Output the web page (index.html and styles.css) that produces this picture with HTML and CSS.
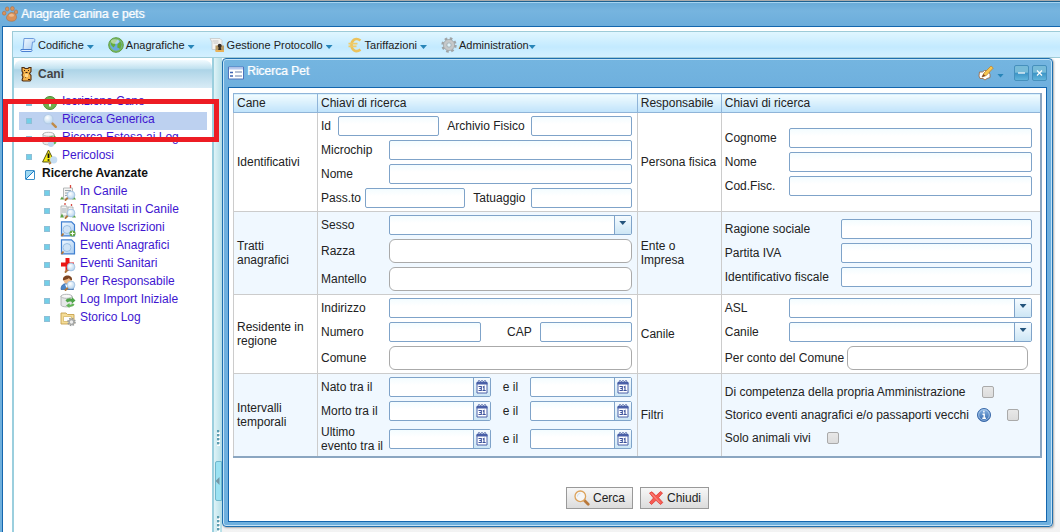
FILE: index.html
```
<!DOCTYPE html>
<html lang="it">
<head>
  <meta charset="UTF-8">
  <meta name="viewport" content="width=device-width, initial-scale=1.0">
  <title>Anagrafe canina e pets</title>
  <link rel="stylesheet" href="styles.css">
</head>
<body>
  <!-- shared icons -->
  <svg class="sprite" aria-hidden="true">
    <defs>
      <linearGradient id="g-doc" x1="0" y1="0" x2="1" y2="1"><stop offset="0" stop-color="#f4faff"/><stop offset="1" stop-color="#a9cdf2"/></linearGradient>
      <radialGradient id="g-lens" cx=".4" cy=".35" r=".7"><stop offset="0" stop-color="#fff"/><stop offset="1" stop-color="#b4d3ee"/></radialGradient>
      <linearGradient id="g-info" x1="0" y1="0" x2="0" y2="1"><stop offset="0" stop-color="#8db8e6"/><stop offset="1" stop-color="#2d62a8"/></linearGradient>
    </defs>
    <symbol id="paw" viewBox="0 0 16 16">
      <g fill="#d9925a" stroke="#a8693d" stroke-width=".5"><ellipse cx="2.2" cy="7.2" rx="1.8" ry="2"/><ellipse cx="5.2" cy="3" rx="1.8" ry="2.1"/><ellipse cx="10.4" cy="2.6" rx="1.9" ry="2.1"/><ellipse cx="14" cy="6" rx="1.7" ry="2.1"/><path d="M5 13.5c-1.600-2.500 1-6 4-7 2.800-.4 4.600 1.200 5.400 3.400.7 2.500-.8 5-3.600 5.300-2.300.2-4.600-.2-5.800-1.700z"/></g>
      <ellipse cx="9.500" cy="9.200" rx="2.600" ry="1.500" fill="#f0b989"/>
    </symbol>
    <symbol id="scroll" viewBox="0 0 16 16">
      <path d="M4 1.500h9.500c1 0 1.500.8 1.300 1.800L14.500 5h-2l-1 8H3z" fill="url(#g-doc)" stroke="#6d9bdc"/>
      <path d="M1 12.500h10.500c.8 0 .7 2-.3 2H2c-1 0-1.500-1-1-2z" fill="#e4f1ff" stroke="#4a7fd0"/>
    </symbol>
    <symbol id="globe" viewBox="0 0 16 16">
      <circle cx="8" cy="8" r="7.300" fill="#7dbb5c" stroke="#5c9c46"/>
      <circle cx="8" cy="8" r="5.800" fill="#68a9df"/>
      <path d="M3 4.500C5 2 8 1.800 9.500 2.500L8 5 6.500 6l1 2-2 2.500L3 8z M9.500 7l3-2.500 1.300 3-1.500 4.500-3-1.500z" fill="#65ad3b"/>
      <ellipse cx="7" cy="4.500" rx="4" ry="2.300" fill="#fff" opacity=".5"/>
    </symbol>
    <symbol id="lockdoc" viewBox="0 0 16 16">
      <path d="M1 1.500h10l2 2v9H3V5z" fill="#f4f4f2" stroke="#c5c8c8" stroke-width=".8"/>
      <path d="M3.500 4h6M4.500 6h5" stroke="#c4c4c4"/>
      <path d="M6.500 8.500h8.500v5.500H6.500z" fill="#b99a63"/><path d="M6.500 13h8.500v2H6.500z" fill="#e8b25a"/>
      <circle cx="10.700" cy="8.800" r="2" fill="#35302a"/><path d="M10 9h1.500l.8 4H9.200z" fill="#35302a"/>
    </symbol>
    <symbol id="euro" viewBox="0 0 16 16">
      <path d="M13.500 3.500C8.500-.2 4.500 3.500 4.500 8s4 8.300 9 4.600" fill="none" stroke="#ebc25c" stroke-width="2.600"/>
      <path d="M1.500 6.600h9M1.500 9.400h8" stroke="#f0cb69" stroke-width="1.600"/>
    </symbol>
    <symbol id="gear" viewBox="0 0 16 16">
      <circle cx="8" cy="8" r="6.500" fill="none" stroke="#a0a4a6" stroke-width="2.400" stroke-dasharray="2.600 2.505"/>
      <circle cx="8" cy="8" r="4" fill="none" stroke="#c6c8c9" stroke-width="3.200"/>
      <circle cx="8" cy="8" r="5.600" fill="none" stroke="#9ba0a2" stroke-width=".7"/><circle cx="8" cy="8" r="2.200" fill="#dff3fb" stroke="#94999b" stroke-width=".7"/>
    </symbol>
    <symbol id="dog" viewBox="0 0 16 16">
      <path d="M3 1.500h2l1 1h3l1-1h2v4l-1.500 2 1.500 2v4l-1 1.500H4l-1-1 1-3-1-2 1-2L3 5z" fill="#f3b24a" stroke="#4f2c12" stroke-width="1.100"/>
      <path d="M5.500 4v1M9.500 4v1M6.500 6.500h2M6 11h1M9 13.500h2" stroke="#3b1e0a"/><path d="M6 8h3v3H6z" fill="#ffd98a"/>
    </symbol>
    <symbol id="lens" viewBox="0 0 16 16">
      <path d="M9.800 9.800l4 4" stroke="#c08a48" stroke-width="2.400" stroke-linecap="round"/>
      <circle cx="6.300" cy="6.200" r="4.700" fill="url(#g-lens)" stroke="#b5cce6" stroke-width="1.200"/>
    </symbol>
    <symbol id="minilens" viewBox="0 0 16 16">
      <path d="M8 12.500L5.500 15" stroke="#b0763a" stroke-width="1.800" stroke-linecap="round"/>
      <circle cx="11" cy="10" r="3.900" fill="url(#g-lens)" stroke="#9dbfdf" stroke-width=".8"/>
    </symbol>
    <symbol id="add" viewBox="0 0 16 16">
      <circle cx="8" cy="8" r="6.500" fill="#6fb04d" stroke="#4b8a35"/><path d="M8 4.500v7M4.500 8h7" stroke="#fff" stroke-width="2"/>
    </symbol>
    <symbol id="db" viewBox="0 0 16 16">
      <path d="M1 3v9c0 2.500 11 2.500 11 0V3z" fill="#e5e7e7" stroke="#a3a7a8" stroke-width=".8"/><ellipse cx="6.500" cy="3.300" rx="5.500" ry="2" fill="#f8f8f8" stroke="#a3a7a8" stroke-width=".8"/>
      <path d="M5.500 7.500c1.500-2.500 4.500-2.700 6.500-1.500V4l3.500 3.500-3.500 3V9c-2-.9-3.500-.5-4.500.5z" fill="#4fa548"/>
      <path d="M14.500 11.500c-1 2-3.500 2.500-5 2V15L6 12.500 9.500 10v1.500c1.500.4 2.500 0 3.500-1z" fill="#64b558"/>
    </symbol>
    <symbol id="dblens" viewBox="0 0 16 16"><use href="#db"/><circle cx="9" cy="13" r="3" fill="#bcd6ee"/></symbol>
    <symbol id="warning" viewBox="0 0 16 16">
      <path d="M6.500 1L12.500 13H.6z" fill="#f8ec16" stroke="#56540f"/><path d="M6.500 4.500v4.500M6.500 10.300v1.500" stroke="#111" stroke-width="1.800"/>
      <path d="M9 13.500L7 15" stroke="#b0763a" stroke-width="1.600"/><circle cx="11.700" cy="10.800" r="3.600" fill="#c6ddf2"/>
    </symbol>
    <symbol id="kennel" viewBox="0 0 16 16">
      <path d="M3.500 3h9v11h-9z" fill="#f5f5f5" stroke="#a6a9aa" stroke-width=".8"/><path d="M5 5.500h6M5 8h3M5 10.500h2" stroke="#98a6ad"/>
      <path d="M10.500 0v3" stroke="#d84b42" stroke-width="1.300"/><path d="M0 14.500l2-3 2 3zM12 14.500l2-3 2 3z" fill="#5ba345"/><use href="#minilens"/>
    </symbol>
    <symbol id="transit" viewBox="0 0 16 16">
      <path d="M1 3h6v10H1zM8 4h5v9H8z" fill="#f3f4f4" stroke="#a3a7a8" stroke-width=".8"/><path d="M3 5v5M5 5v5M9.500 6v4" stroke="#a5afb4"/>
      <path d="M5 0v2M11.500 1v2" stroke="#d84b42" stroke-width="1.300"/><path d="M0 14.500l2-4 2 4zM12 14.500l2-3 2 3z" fill="#5ba345"/><use href="#minilens"/>
    </symbol>
    <symbol id="bluedoc" viewBox="0 0 16 16">
      <path d="M1.500.8h10l3 3v11h-13z" fill="url(#g-doc)" stroke="#3f7fd0" stroke-width="1.200"/><circle cx="7" cy="8.500" r="4" fill="#cfe3f6" stroke="#8eb8e0" stroke-width=".8"/>
      <path d="M3.500 12.500L1.500 15" stroke="#b0763a" stroke-width="1.800"/>
    </symbol>
    <symbol id="bluedocadd" viewBox="0 0 16 16"><use href="#bluedoc"/><circle cx="12.500" cy="12.500" r="3" fill="#5da23c"/><path d="M12.500 10.500v4M10.500 12.500h4" stroke="#fff" stroke-width="1.200"/></symbol>
    <symbol id="health" viewBox="0 0 16 16"><path d="M5.500 1h4v4.500H14v4H9.500V14h-4V9.500H1v-4h4.500z" fill="#ea1616"/><use href="#minilens"/></symbol>
    <symbol id="person" viewBox="0 0 16 16">
      <path d="M1 14.500c0-4 2-6 6-6s6.500 2 6.500 6z" fill="#4c86c8" stroke="#2e5f9f" stroke-width=".7"/><circle cx="7.500" cy="5" r="3.800" fill="#efba88"/>
      <path d="M3 5.500C2.500 2 5 .6 7.500.6S12.500 2 12 5.500C10.500 5 9.500 4 9 3 7.500 4.500 5 4.500 3 5.500z" fill="#7d4420"/><path d="M5 9.500L7 14l2-4.500z" fill="#fff"/><use href="#minilens"/>
    </symbol>
    <symbol id="folder" viewBox="0 0 16 16">
      <path d="M1 2h5l1.500 1.500H14v9.500H1z" fill="#f5dd97" stroke="#c6a04e" stroke-width=".9"/><path d="M3.500 5.500h8v5h-8z" fill="#fff" stroke="#d6b76a" stroke-width=".8"/>
      <circle cx="11.500" cy="11" r="3.400" fill="none" stroke="#969a9c" stroke-width="1.800" stroke-dasharray="1.500 1.170"/><circle cx="11.500" cy="11" r="2.300" fill="#eee" stroke="#a5a8aa" stroke-width="1.300"/>
    </symbol>
    <symbol id="form" viewBox="0 0 16 14">
      <path d="M.5 1h15v12H.5z" fill="#fff" stroke="#4f74bd"/><path d="M1 1.500h14v2H1z" fill="#b7c9ee"/><path d="M2 6.500h3M2 10h3" stroke="#3e64b4" stroke-width="1.300"/><path d="M7 6h7M7 10h7" stroke="#b4bfd4" stroke-width="1.800"/>
    </symbol>
    <symbol id="pencil" viewBox="0 0 16 16">
      <path d="M1.500 7h3l2-1.500h4l1.500 4v3l-3 1-2 1.500-2-1.500h-3L1 11z" fill="#fff" stroke="#99633b" stroke-width=".8"/><path d="M4 12l2-4 7-7 2.300 2-7 7.500z" fill="#f7c64f" stroke="#b8863a" stroke-width=".8"/><path d="M4 12l1.500-3 1.800 1.800z" fill="#7d3f24"/>
    </symbol>
    <symbol id="calendar" viewBox="0 0 12 15">
      <path d="M1 3.500h10v10.500H1z" fill="#fff" stroke="#4a60a8"/><path d="M.5 3.500h11v2H.5z" fill="#4a60a8"/><path d="M1.500 3.500L3 1.300l1.500 1.700L6 1.300l1.500 1.700L9 1.300l1.500 2.200" fill="none" stroke="#3c529c" stroke-width=".9"/>
      <path d="M2.500 7.500h2.800v4H2.500M3.300 9.500h2M8 12V7.500L6.800 8.300M6.500 11.500h3.200" fill="none" stroke="#3c529c" stroke-width="1.100"/>
    </symbol>
    <symbol id="info" viewBox="0 0 14 14">
      <circle cx="7" cy="7" r="6.500" fill="url(#g-info)" stroke="#3a69a9"/><circle cx="7" cy="7" r="5.300" fill="none" stroke="#b9d4f0" stroke-width=".7"/><path d="M6.900 2.800v1.700M5.500 6.200h1.700v4M5.300 10.200h3.600" stroke="#fff" stroke-width="1.400" fill="none"/>
    </symbol>
    <symbol id="find" viewBox="0 0 16 16">
      <path d="M10.500 10.500l3.700 3.700" stroke="#b9783a" stroke-width="2.800" stroke-linecap="round"/><circle cx="6.300" cy="6.300" r="5.300" fill="#f6f6f6" stroke="#dca25b" stroke-width="1.300"/><path d="M3.500 6.500c0-2 1-3 2.800-3" fill="none" stroke="#c9dcec"/>
    </symbol>
    <symbol id="cross" viewBox="0 0 16 16">
      <path d="M1.500 3L4 1.800 8 5.800 12.500 1.500l2 1.500-4 4.700 4.300 4.800-2.300 2L8 10.300 3.500 14.500l-2-2 4-4.500z" fill="#f65a52" stroke="#de3a34" stroke-width=".8"/><path d="M3 3.200l9 9.500" stroke="#ff9a90" stroke-width=".9"/>
    </symbol>
  </svg>

  <header class="app-title">
    <svg class="icon"><use href="#paw"/></svg>
    <span>Anagrafe canina e pets</span>
  </header>

  <div class="app-body">
    <nav class="menu-bar">
      <button type="button" class="menu"><svg class="icon"><use href="#scroll"/></svg>Codifiche<i class="caret"></i></button>
      <button type="button" class="menu"><svg class="icon"><use href="#globe"/></svg>Anagrafiche<i class="caret"></i></button>
      <button type="button" class="menu"><svg class="icon"><use href="#lockdoc"/></svg>Gestione Protocollo<i class="caret"></i></button>
      <button type="button" class="menu"><svg class="icon"><use href="#euro"/></svg>Tariffazioni<i class="caret"></i></button>
      <button type="button" class="menu tight"><svg class="icon"><use href="#gear"/></svg>Administration<i class="caret"></i></button>
    </nav>

    <div class="workspace">
      <aside class="sidebar">
        <h2 class="panel-title"><svg class="icon"><use href="#dog"/></svg>Cani</h2>
        <ul class="tree">
          <li><i class="bullet"></i><svg class="icon"><use href="#add"/></svg><a href="#">Iscrizione Cane</a></li>
          <li class="selected"><i class="bullet"></i><svg class="icon"><use href="#lens"/></svg><a href="#">Ricerca Generica</a></li>
          <li><i class="bullet"></i><svg class="icon"><use href="#dblens"/></svg><a href="#">Ricerca Estesa ai Log</a></li>
          <li><i class="bullet"></i><svg class="icon"><use href="#warning"/></svg><a href="#">Pericolosi</a></li>
          <li class="group"><i class="toggle"></i><b>Ricerche Avanzate</b></li>
          <li class="sub"><i class="bullet"></i><svg class="icon"><use href="#kennel"/></svg><a href="#">In Canile</a></li>
          <li class="sub"><i class="bullet"></i><svg class="icon"><use href="#transit"/></svg><a href="#">Transitati in Canile</a></li>
          <li class="sub"><i class="bullet"></i><svg class="icon"><use href="#bluedocadd"/></svg><a href="#">Nuove Iscrizioni</a></li>
          <li class="sub"><i class="bullet"></i><svg class="icon"><use href="#bluedoc"/></svg><a href="#">Eventi Anagrafici</a></li>
          <li class="sub"><i class="bullet"></i><svg class="icon"><use href="#health"/></svg><a href="#">Eventi Sanitari</a></li>
          <li class="sub"><i class="bullet"></i><svg class="icon"><use href="#person"/></svg><a href="#">Per Responsabile</a></li>
          <li class="sub"><i class="bullet"></i><svg class="icon"><use href="#db"/></svg><a href="#">Log Import Iniziale</a></li>
          <li class="sub"><i class="bullet"></i><svg class="icon"><use href="#folder"/></svg><a href="#">Storico Log</a></li>
        </ul>
        <div class="highlight"></div>
      </aside>

      <div class="splitter">
        <i class="grip"></i>
        <button type="button" class="collapse" aria-label="Chiudi pannello"></button>
        <i class="grip"></i>
      </div>

      <main class="desktop">
        <section class="window">
          <header class="window-title">
            <svg class="icon"><use href="#form"/></svg>
            <h1>Ricerca Pet</h1>
            <svg class="icon tool"><use href="#pencil"/></svg><i class="caret"></i>
            <button type="button" class="win-btn" aria-label="Riduci"><svg viewBox="0 0 13 13"><path d="M3 6.500h7" stroke="#fff" stroke-width="1.200"/></svg></button>
            <button type="button" class="win-btn" aria-label="Chiudi"><svg viewBox="0 0 13 13"><path d="M4 4l5 5M9 4l-5 5" stroke="#fff" stroke-width="1.200"/></svg></button>
          </header>

          <form class="window-body">
            <table class="search">
              <colgroup><col class="c-name"><col><col class="c-name"><col></colgroup>
              <thead>
                <tr><th>Cane</th><th>Chiavi di ricerca</th><th>Responsabile</th><th>Chiavi di ricerca</th></tr>
              </thead>
              <tbody>
                <tr>
                  <td>Identificativi</td>
                  <td>
                    <div class="fields">
                      <div class="row"><label for="id">Id</label><input class="push" type="text" id="id"><label class="mid" for="archivio">Archivio Fisico</label><input type="text" id="archivio"></div>
                      <div class="row"><label class="w-m" for="microchip">Microchip</label><input type="text" id="microchip"></div>
                      <div class="row"><label class="w-m" for="nome-cane">Nome</label><input type="text" id="nome-cane"></div>
                      <div class="row"><label class="w-s" for="passaporto">Pass.to</label><input type="text" id="passaporto"><label class="mid" for="tatuaggio">Tatuaggio</label><input type="text" id="tatuaggio"></div>
                    </div>
                  </td>
                  <td>Persona fisica</td>
                  <td>
                    <div class="fields">
                      <div class="row"><label class="w-r" for="cognome">Cognome</label><input type="text" id="cognome"></div>
                      <div class="row"><label class="w-r" for="nome">Nome</label><input type="text" id="nome"></div>
                      <div class="row"><label class="w-r" for="codfisc">Cod.Fisc.</label><input type="text" id="codfisc"></div>
                    </div>
                  </td>
                </tr>
                <tr class="alt">
                  <td>Tratti anagrafici</td>
                  <td>
                    <div class="fields">
                      <div class="row"><label class="w-m" for="sesso">Sesso</label><span class="combo"><select id="sesso"><option></option></select><i class="arrow"></i></span></div>
                      <div class="row tall"><label class="w-m" for="razza">Razza</label><input class="suggest" type="text" id="razza"></div>
                      <div class="row tall"><label class="w-m" for="mantello">Mantello</label><input class="suggest" type="text" id="mantello"></div>
                    </div>
                  </td>
                  <td>Ente o Impresa</td>
                  <td>
                    <div class="fields">
                      <div class="row"><label class="w-l" for="ragione">Ragione sociale</label><input type="text" id="ragione"></div>
                      <div class="row"><label class="w-l" for="piva">Partita IVA</label><input type="text" id="piva"></div>
                      <div class="row"><label class="w-l" for="idfisc">Identificativo fiscale</label><input type="text" id="idfisc"></div>
                    </div>
                  </td>
                </tr>
                <tr>
                  <td>Residente in regione</td>
                  <td>
                    <div class="fields">
                      <div class="row"><label class="w-m" for="indirizzo">Indirizzo</label><input type="text" id="indirizzo"></div>
                      <div class="row"><label class="w-m" for="numero">Numero</label><input class="short" type="text" id="numero"><label class="cap" for="cap">CAP</label><input class="short" type="text" id="cap"></div>
                      <div class="row tall"><label class="w-m" for="comune">Comune</label><input class="suggest" type="text" id="comune"></div>
                    </div>
                  </td>
                  <td>Canile</td>
                  <td>
                    <div class="fields">
                      <div class="row"><label class="w-r" for="asl">ASL</label><span class="combo"><select id="asl"><option></option></select><i class="arrow"></i></span></div>
                      <div class="row"><label class="w-r" for="canile">Canile</label><span class="combo"><select id="canile"><option></option></select><i class="arrow"></i></span></div>
                      <div class="row tall"><label class="w-xl" for="conto">Per conto del Comune</label><input class="suggest city" type="text" id="conto"></div>
                    </div>
                  </td>
                </tr>
                <tr class="alt">
                  <td>Intervalli temporali</td>
                  <td>
                    <div class="fields">
                      <div class="row"><label class="w-m" for="nato-da">Nato tra il</label><span class="date"><input type="text" id="nato-da"><button type="button" aria-label="Calendario"><svg><use href="#calendar"/></svg></button></span><label class="to" for="nato-a">e il</label><span class="date"><input type="text" id="nato-a"><button type="button" aria-label="Calendario"><svg><use href="#calendar"/></svg></button></span></div>
                      <div class="row"><label class="w-m" for="morto-da">Morto tra il</label><span class="date"><input type="text" id="morto-da"><button type="button" aria-label="Calendario"><svg><use href="#calendar"/></svg></button></span><label class="to" for="morto-a">e il</label><span class="date"><input type="text" id="morto-a"><button type="button" aria-label="Calendario"><svg><use href="#calendar"/></svg></button></span></div>
                      <div class="row"><label class="w-m" for="evento-da">Ultimo evento tra il</label><span class="date"><input type="text" id="evento-da"><button type="button" aria-label="Calendario"><svg><use href="#calendar"/></svg></button></span><label class="to" for="evento-a">e il</label><span class="date"><input type="text" id="evento-a"><button type="button" aria-label="Calendario"><svg><use href="#calendar"/></svg></button></span></div>
                    </div>
                  </td>
                  <td>Filtri</td>
                  <td>
                    <div class="fields filters">
                      <div class="row"><label for="competenza">Di competenza della propria Amministrazione</label><input type="checkbox" id="competenza"></div>
                      <div class="row"><label for="storico">Storico eventi anagrafici e/o passaporti vecchi</label><svg class="info"><use href="#info"/></svg><input type="checkbox" id="storico"></div>
                      <div class="row"><label for="vivi">Solo animali vivi</label><input type="checkbox" id="vivi"></div>
                    </div>
                  </td>
                </tr>
              </tbody>
            </table>
            <div class="actions">
              <button type="submit"><svg class="icon"><use href="#find"/></svg>Cerca</button>
              <button type="button"><svg class="icon"><use href="#cross"/></svg>Chiudi</button>
            </div>
          </form>
        </section>
      </main>
    </div>
  </div>
</body>
</html>
```

FILE: styles.css
```
* {
  box-sizing: border-box;
}
body {
  margin: 0;
  min-height: 100vh;
  display: flex;
  flex-direction: column;
  font-family: "Liberation Sans", Arial, sans-serif;
  font-size: 12px;
  line-height: 14px;
  color: #222;
  background: #6fb0dd;
}
button, input, select {
  font: inherit;
  color: inherit;
}
.sprite {
  position: absolute;
  width: 0;
  height: 0;
}
.icon {
  width: 16px;
  height: 16px;
  flex: none;
}
.caret {
  width: 7px;
  height: 4px;
  background: #2785b8;
  clip-path: polygon(0 0, 100% 0, 50% 100%);
}

/* outer window */
.app-title {
  display: flex;
  align-items: center;
  gap: 3px;
  height: 26px;
  padding: 0 0 0 2px;
  border-top: 1px solid #aaa;
  box-shadow: inset 0 1px #1d6191, inset 0 2px #a5d3f0;
  background: linear-gradient(#66a8d6, #76b4df 40%, #6caddb);
  color: #fff;
  font-size: 12px;
  text-shadow: 1px 0 rgba(255, 255, 255, 0.5);
}
.app-body {
  flex: 1;
  display: flex;
  flex-direction: column;
  margin-left: 2px;
  padding: 4px 0 0 9px;
  border: solid #1466ae;
  border-width: 1px 0 0 1px;
  background: #fff;
}
.menu-bar {
  display: flex;
  gap: 14px;
  height: 27px;
  padding: 0 7px;
  border: 1px solid #9dcbd8;
  border-right: none;
  background: linear-gradient(#e0f6ff, #c3eaff 60%, #d4f0ff);
}
.menu {
  display: flex;
  align-items: center;
  gap: 2px;
  padding: 0;
  border: none;
  background: none;
  font-size: 11px;
}
.menu .caret {
  margin: 5px 0 0 1px;
}
.menu.tight .caret {
  margin-left: -2px;
}

/* left panel */
.workspace {
  flex: 1;
  display: flex;
}
.sidebar {
  position: relative;
  width: 202px;
  flex: none;
  border: solid #9bcfde;
  border-width: 0 2px;
  background: #fff;
}
.panel-title {
  display: flex;
  align-items: center;
  gap: 3px;
  height: 28px;
  margin: 2px 0 6px;
  padding-left: 5px;
  border-radius: 8px 8px 0 0;
  background: linear-gradient(#f2fbff, #c2e2f0 30%, #add4e7 35%, #d9ecf6);
  font-size: 12px;
  color: #444;
}
.tree {
  margin: 0;
  padding: 0 5px;
  list-style: none;
}
.tree li {
  display: flex;
  align-items: center;
  height: 18px;
  padding-left: 7px;
}
.tree li.sub {
  padding-left: 25px;
}
.tree .icon {
  margin: 0 4px 0 10px;
}
.tree .selected {
  background: #bdd1f0;
}
.tree a, .tree b {
  padding-bottom: 4px;
}
.tree a {
  color: #4016d0;
  text-decoration: none;
}
.tree b {
  color: #111;
}
.bullet {
  width: 6px;
  height: 6px;
  background: #73cfe8;
  border: 1px solid #8fbfd6;
}
.tree .group {
  padding-left: 6px;
}
.toggle {
  width: 10px;
  height: 10px;
  margin-right: 7px;
  border: 1px solid #3c8fc8;
  border-radius: 1px;
  background: linear-gradient(135deg, #9fd8f2 45%, #1a7dc8 45%, #1a7dc8 55%, #fff 55%);
}
.highlight {
  position: absolute;
  top: 41px;
  left: -11px;
  width: 216px;
  height: 43px;
  border: 5px solid #ed1c24;
  z-index: 1;
}

.splitter {
  width: 8px;
  flex: none;
  display: flex;
  flex-direction: column;
  justify-content: flex-end;
  align-items: center;
  gap: 15px;
  background: linear-gradient(90deg, #dff3f7, #b5dfe7);
}
.grip {
  width: 3px;
  height: 16px;
  background: radial-gradient(circle at 1px 1px, #5b9db0 1px, #fff 2px) 0 0 / 3px 4px;
}
.collapse {
  display: flex;
  align-items: center;
  width: 7px;
  height: 40px;
  padding: 0;
  border: 1px solid #6fb6cb;
  border-radius: 2px 0 0 2px;
  background: #9be2f2;
}
.collapse::before {
  content: "";
  width: 4px;
  height: 8px;
  background: #7598a6;
  clip-path: polygon(100% 0, 100% 100%, 0 50%);
}

/* inner window */
.desktop {
  flex: 1;
  display: flex;
  min-width: 0;
  padding: 0 7px 5px 0;
  background: linear-gradient(#fff 80%, #f3f3f3);
}
.window {
  flex: 1;
  display: flex;
  flex-direction: column;
  min-width: 0;
  padding: 0 5px 4px;
  border: 1px solid #1f6fae;
  border-radius: 4px;
  box-shadow: inset 0 0 0 1px #c4e3f7, 1px 1px 2px #aaa;
  background: linear-gradient(#74b5e0, #6fb0de 28px);
}
.window-title {
  display: flex;
  align-items: center;
  height: 28px;
  color: #fff;
}
.window-title h1 {
  flex: 1;
  margin: 0 0 4px 3px;
  font-size: 12px;
  font-weight: normal;
  line-height: 14px;
  text-shadow: 1px 0 rgba(255, 255, 255, 0.5);
}
.window-title .caret {
  margin: 5px 10px 0 3px;
}
.win-btn {
  display: flex;
  width: 15px;
  height: 16px;
  margin-right: 3px;
  padding: 0;
  border: 1px solid #4690bd;
  border-radius: 2px;
  background: linear-gradient(#77bbd8 45%, #3b94c6 50%, #62b4db);
}
.win-btn:last-child {
  margin-right: 0;
}
.window-body {
  flex: 1;
  padding: 5px 4px 4px;
  border: 1px solid #1466ae;
  background: #fff;
}

.search {
  width: 100%;
  table-layout: fixed;
  border-collapse: collapse;
  border: 1px solid #8ba6c1;
  border-bottom-width: 2px;
  border-right-width: 2px;
}
.c-name {
  width: 84px;
}
.search th {
  height: 19px;
  padding: 0 3px;
  border: 1px solid #8fb4d8;
  background: linear-gradient(#f2fcff, #bfe3fb);
  font-weight: normal;
  text-align: left;
}
.search td {
  padding: 3px;
  border: 1px solid #ccc;
}
.search td:nth-child(2) {
  padding-right: 5px;
}
.search td:nth-child(4) {
  padding-right: 8px;
}
.alt td {
  background: #f0f8ff;
}
.fields {
  display: flex;
  flex-direction: column;
  gap: 4px;
}
.row {
  display: flex;
  align-items: center;
  min-height: 20px;
}
.row.tall {
  height: 24px;
}
.row label {
  flex: none;
}
.row .w-s { width: 44px; }
.row .w-r { width: 64px; }
.row .w-m { width: 68px; }
.row .w-l { width: 116px; }
.row .w-xl { width: 122px; }
.row .mid {
  margin: 0 6px 0 8px;
}
.row .cap {
  margin: 0 8px 0 auto;
}
.row .to {
  margin: 0 12px;
}
input[type="text"], .combo, .date {
  flex: 1;
  min-width: 0;
  height: 20px;
  padding: 0 3px;
  border: 1px solid #7fa3c9;
  border-radius: 2px;
  background: linear-gradient(#f3fcff, #fff 7px);
}
input.push {
  margin-left: 7px;
}
input.short {
  flex: 0 1 92px;
}
input.suggest {
  height: 24px;
  border-color: #aaa;
  border-radius: 6px;
  background: #fff;
}
input.city {
  margin-right: 4px;
}
.combo, .date {
  display: flex;
  padding: 0;
}
.combo select, .date input[type="text"] {
  flex: 1;
  min-width: 0;
  height: 18px;
  border: none;
  background: none;
  appearance: none;
}
.arrow, .date button {
  display: flex;
  justify-content: center;
  width: 17px;
  padding: 0;
  border: none;
  border-left: 1px solid #7fa3c9;
  background: linear-gradient(#f5fbff, #cde6f5);
}
.arrow::before {
  content: "";
  width: 7px;
  height: 4px;
  margin-top: 5px;
  background: #24547c;
  clip-path: polygon(0 0, 100% 0, 50% 100%);
}
.date button svg {
  width: 12px;
  height: 15px;
  margin-top: 1px;
}
.filters .row {
  min-height: 19px;
}
.filters input {
  appearance: none;
  width: 12px;
  height: 12px;
  margin: 0 0 0 16px;
  border: 1px solid #aaa;
  border-radius: 2px;
  background: linear-gradient(#e8e8e8, #dcdcdc);
}
.info {
  width: 14px;
  height: 14px;
  margin-left: 8px;
}

.actions {
  display: flex;
  justify-content: center;
  gap: 7px;
  margin-top: 29px;
}
.actions button {
  display: flex;
  align-items: center;
  gap: 3px;
  height: 22px;
  padding: 0 7px;
  border: 1px solid #999;
  background: linear-gradient(#f7f7f7, #dcdcdc);
}
```
